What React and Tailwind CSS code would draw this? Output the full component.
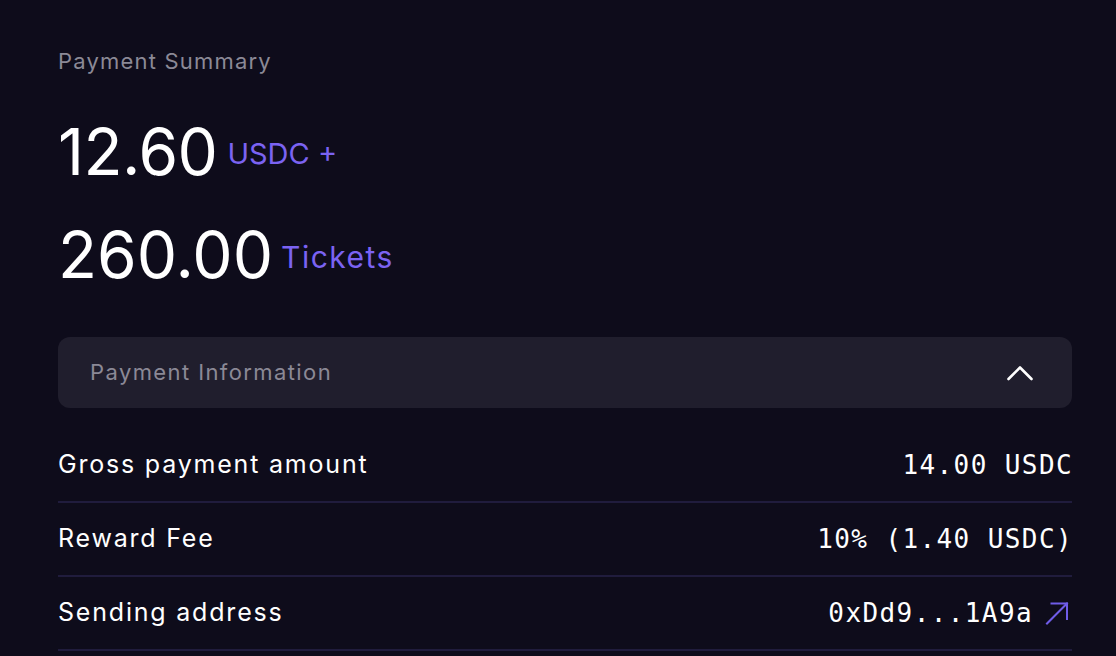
const rows = [
  { label: 'Gross payment amount', value: '14.00 USDC' },
  { label: 'Reward Fee', value: '10% (1.40 USDC)' },
  { label: 'Sending address', value: '0xDd9...1A9a', link: true },
];

function Chevron() {
  return (
    <svg width="26" height="16" viewBox="0 0 26 16" fill="none" stroke="white" strokeWidth="2.6" strokeLinecap="round" strokeLinejoin="round">
      <polyline points="1.5,14 13,2.5 24.5,14" />
    </svg>
  );
}

function OutArrow() {
  return (
    <svg width="24" height="23" viewBox="0 0 24 23" fill="none" stroke="#6f5ce8" strokeWidth="2" strokeLinecap="square">
      <path d="M2 21.5 L22 1.5" />
      <path d="M6.5 1.5 H22 V17" />
    </svg>
  );
}

export default function App() {
  return (
    <div className="w-[1116px] h-[656px] overflow-hidden bg-[#0e0c1b] text-white" style={{ fontFamily: 'Inter, "Noto Sans", sans-serif' }}>
      <div className="px-[58px] pt-[47px] w-[1130px]">
        <h2 className="text-[22px] leading-[28px] text-[#8b8996] tracking-[1.2px]">Payment Summary</h2>

        <div className="mt-[39px] flex items-center gap-[10px]">
          <span className="text-[64px] leading-[76px] tracking-[-0.5px]">12.60</span>
          <span className="text-[29px] text-[#7b63f2] mt-1">USDC +</span>
        </div>
        <div className="mt-[27px] flex items-center gap-[8px]">
          <span className="text-[64px] leading-[76px]">260.00</span>
          <span className="text-[30px] text-[#7b63f2] tracking-[1.5px] mt-1">Tickets</span>
        </div>

        <div className="mt-[44px] w-[1014px] h-[71px] rounded-[12px] bg-[#201e2d] flex items-center justify-between pl-[32px] pr-[39px]">
          <span className="text-[22px] text-[#8b8996] tracking-[1.4px]">Payment Information</span>
          <Chevron />
        </div>

        <div className="mt-[21px] w-[1014px]">
          {rows.map(row => (
            <div key={row.label} className="h-[74px] flex items-center justify-between border-b-2 border-[#201c3d]">
              <span className="text-[25px] tracking-[1.8px]">{row.label}</span>
              <span className="flex items-center gap-[12px] text-[26px] tracking-[1.4px] -mr-[1px]" style={{ fontFamily: '"DejaVu Sans Mono", "Liberation Mono", monospace' }}>
                {row.value}
                {row.link && <span className="mr-[4px]"><OutArrow /></span>}
              </span>
            </div>
          ))}
        </div>
      </div>
    </div>
  );
}
